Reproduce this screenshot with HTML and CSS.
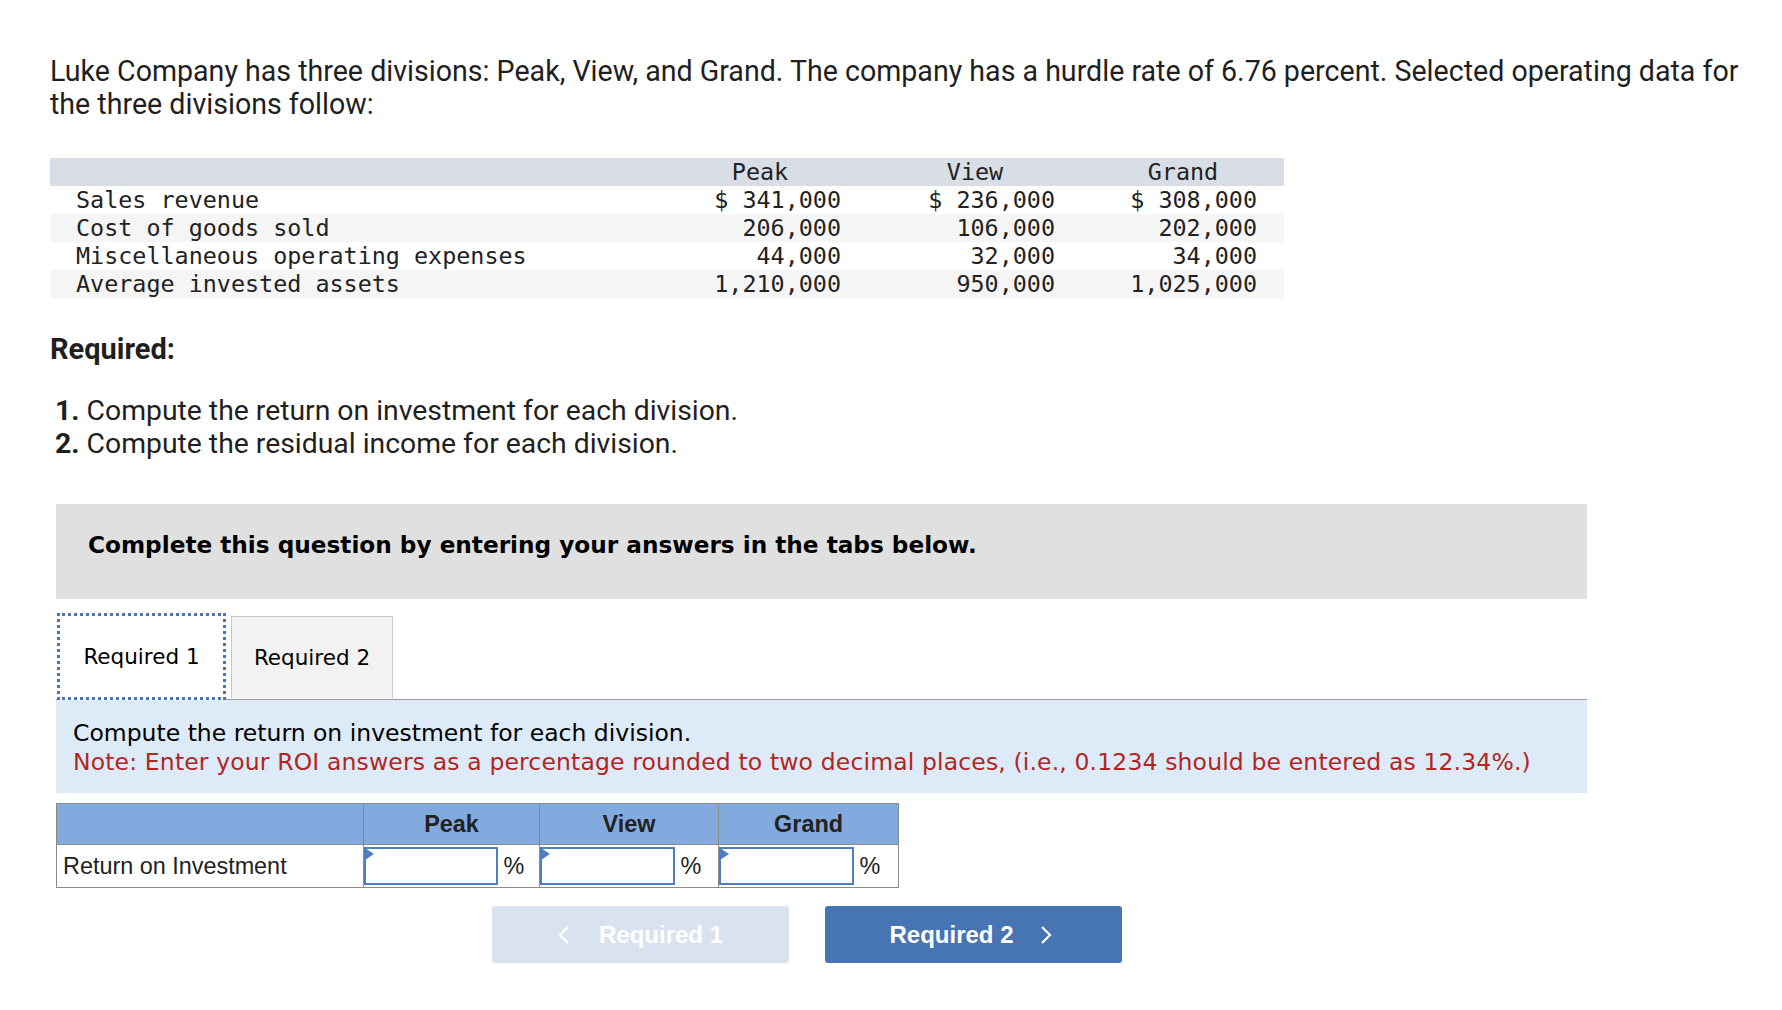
FILE: index.html
```html
<!DOCTYPE html>
<html>
<head>
<meta charset="utf-8">
<link rel="stylesheet" href="styles.css">
</head>
<body>
<div class="page">
  <p class="intro">Luke Company has three divisions: Peak, View, and Grand. The company has a hurdle rate of 6.76 percent. Selected operating data for the three divisions follow:</p>

  <table class="data">
    <colgroup><col class="c-lbl"><col class="c-peak"><col class="c-view"><col class="c-grand"></colgroup>
    <thead>
      <tr><th class="lbl"></th><th>Peak</th><th>View</th><th>Grand</th></tr>
    </thead>
    <tbody>
      <tr><td class="lbl">Sales revenue</td><td>$ 341,000</td><td>$ 236,000</td><td>$ 308,000</td></tr>
      <tr class="alt"><td class="lbl">Cost of goods sold</td><td>206,000</td><td>106,000</td><td>202,000</td></tr>
      <tr><td class="lbl">Miscellaneous operating expenses</td><td>44,000</td><td>32,000</td><td>34,000</td></tr>
      <tr class="alt"><td class="lbl">Average invested assets</td><td>1,210,000</td><td>950,000</td><td>1,025,000</td></tr>
    </tbody>
  </table>

  <h3 class="req">Required:</h3>
  <ol class="steps">
    <li><b>1.</b> Compute the return on investment for each division.</li>
    <li><b>2.</b> Compute the residual income for each division.</li>
  </ol>

  <div class="work">
    <div class="banner">Complete this question by entering your answers in the tabs below.</div>

    <div class="tabs">
      <div class="tab active">Required 1</div>
      <div class="tab second">Required 2</div>
    </div>

    <div class="panel">
      <div>Compute the return on investment for each division.</div>
      <div class="note">Note: Enter your ROI answers as a percentage rounded to two decimal places, (i.e., 0.1234 should be entered as 12.34%.)</div>
    </div>

    <table class="answer">
      <colgroup>
        <col class="a-lbl">
        <col class="a-in1"><col class="a-pct1">
        <col class="a-in2"><col class="a-pct2">
        <col class="a-in3"><col class="a-pct3">
      </colgroup>
      <thead>
        <tr><th class="first"></th><th colspan="2">Peak</th><th colspan="2">View</th><th colspan="2">Grand</th></tr>
      </thead>
      <tbody>
        <tr>
          <td class="first">Return on Investment</td>
          <td class="inp"><div class="box"></div></td><td class="pct">%</td>
          <td class="inp"><div class="box"></div></td><td class="pct">%</td>
          <td class="inp"><div class="box"></div></td><td class="pct">%</td>
        </tr>
      </tbody>
    </table>

    <div class="nav">
      <div class="btn prev">
        <svg class="chev left" width="12" height="20" viewBox="0 0 12 20"><polyline points="10,2 2,10 10,18" fill="none" stroke="#fff" stroke-width="2.2"/></svg>
        <span>Required 1</span>
      </div>
      <div class="btn next">
        <span>Required 2</span>
        <svg class="chev right" width="12" height="20" viewBox="0 0 12 20"><polyline points="2,2 10,10 2,18" fill="none" stroke="#fff" stroke-width="2.2"/></svg>
      </div>
    </div>
  </div>
</div>
</body>
</html>
```

FILE: styles.css
```css
html, body {
  margin: 0;
  padding: 0;
  background: #ffffff;
}

.page {
  padding: 55px 0 0 50px;
  color: #1f1f1f;
  font-family: "Roboto", "Open Sans", sans-serif;
}

.intro {
  margin: 0;
  width: 1715px;
  font-size: 28.6px;
  line-height: 33px;
}

.data {
  margin-top: 37px;
  border-collapse: collapse;
  table-layout: fixed;
  font-family: "DejaVu Sans Mono", monospace;
  font-size: 23.4px;
  color: #222;
  width: 1234px;
}

.c-lbl { width: 602px; }
.c-peak { width: 216px; }
.c-view { width: 214px; }
.c-grand { width: 202px; }

.data th,
.data td {
  padding: 0 27px 0 0;
  height: 28px;
  line-height: 28px;
  font-weight: normal;
  text-align: right;
  white-space: nowrap;
}

.data thead tr {
  background: #d9dde5;
}

.data th {
  text-align: center;
  padding: 0;
}

.data .lbl {
  text-align: left;
  padding-left: 26px;
}

.data tr.alt {
  background: #f5f5f5;
}

.req {
  margin: 36px 0 0 0;
  font-size: 29px;
  font-weight: 700;
  line-height: 30px;
}

.steps {
  list-style: none;
  margin: 30px 0 0 0;
  padding: 0 0 0 5px;
  font-size: 28.35px;
  line-height: 33px;
}

.steps b {
  font-weight: 700;
}

.work {
  margin: 44px 0 0 6px;
  width: 1531px;
}

.banner {
  background: #e0e0e0;
  height: 95px;
  box-sizing: border-box;
  padding: 0 0 14px 32px;
  display: flex;
  align-items: center;
  font-family: "DejaVu Sans", Verdana, sans-serif;
  font-weight: bold;
  font-size: 23.2px;
  color: #000;
}

.tabs {
  margin-top: 14px;
  display: flex;
  align-items: flex-end;
  gap: 5px;
  border-bottom: 1px solid #9a9a9a;
  padding-left: 1px;
  font-family: "DejaVu Sans", Verdana, sans-serif;
  font-size: 21.5px;
  color: #000;
}

.tab {
  height: 82px;
  box-sizing: border-box;
  display: flex;
  align-items: center;
  justify-content: center;
  background: #f2f2f2;
  border: 1px solid #c8c8c8;
  border-bottom: none;
  width: 162px;
}

.tab.second {
  margin-bottom: 1px;
}

.tab.active {
  background: #fff;
  width: 169px;
  height: 87px;
  border: 3px dotted #4a76b8;
  margin-bottom: -1px;
  position: relative;
  z-index: 1;
}

.panel {
  background: #ddebf8;
  height: 93px;
  box-sizing: border-box;
  padding: 19px 0 0 17px;
  font-family: "DejaVu Sans", Verdana, sans-serif;
  font-size: 23.5px;
  line-height: 28.5px;
  color: #000;
}

.panel .note {
  color: #b1261e;
  letter-spacing: 0.14px;
}

.answer {
  margin-top: 10px;
  border-collapse: collapse;
  table-layout: fixed;
  width: 842px;
  font-family: "Liberation Sans", Arial, sans-serif;
  font-size: 23.4px;
  color: #222;
}

.a-lbl { width: 307px; }
.a-in1 { width: 134px; }
.a-pct1 { width: 42px; }
.a-in2 { width: 135px; }
.a-pct2 { width: 44px; }
.a-in3 { width: 135px; }
.a-pct3 { width: 45px; }

.answer th,
.answer td {
  border: 1px solid #8a8a8a;
  height: 40px;
  padding: 0;
}

.answer th {
  background: #83aadf;
  font-weight: bold;
  text-align: center;
}

.answer .first {
  text-align: left;
  padding-left: 6px;
  font-weight: normal;
}

.answer td.inp {
  border-right: none;
  padding: 1px 0;
}

.answer td.pct {
  border-left: none;
  padding-left: 6px;
}

.box {
  position: relative;
  height: 38px;
  box-sizing: border-box;
  border: 2px solid #4f7fc0;
  background: #fff;
}

.box::before {
  content: "";
  position: absolute;
  left: -1px;
  top: -1px;
  border-left: 9px solid #4f7fc0;
  border-top: 6px solid transparent;
  border-bottom: 6px solid transparent;
}

.nav {
  margin: 18px 0 0 436px;
  display: flex;
  gap: 36px;
}

.btn {
  width: 297px;
  height: 57px;
  box-sizing: border-box;
  border-radius: 3px;
  display: flex;
  align-items: center;
  justify-content: center;
  font-family: "Liberation Sans", Arial, sans-serif;
  font-weight: bold;
  font-size: 24px;
  color: #fff;
}

.btn.prev {
  background: #d9e3ef;
}

.btn.next {
  background: #4775b3;
  padding-right: 6px;
}

.chev.left { margin-right: 29px; }
.chev.right { margin-left: 26px; }
```
